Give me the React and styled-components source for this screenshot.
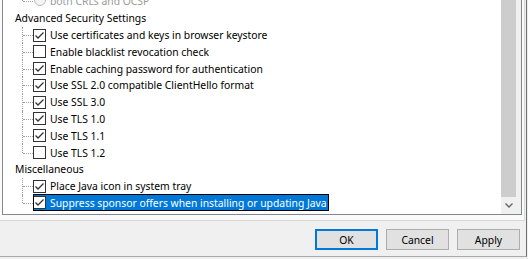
import { styled, createGlobalStyle } from 'styled-components'

const GlobalStyle = createGlobalStyle`
  body {
    margin: 0;
    background: #f0f0f0;
    overflow: hidden;
    font-family: 'Noto Sans', 'Open Sans', sans-serif;
    font-size: 10.35px;
  }
`

const items = [
  { kind: 'radio', label: 'both CRLs and OCSP', disabled: true, last: true },
  { kind: 'group', label: 'Advanced Security Settings' },
  { kind: 'check', label: 'Use certificates and keys in browser keystore', checked: true },
  { kind: 'check', label: 'Enable blacklist revocation check', checked: false },
  { kind: 'check', label: 'Enable caching password for authentication', checked: true },
  { kind: 'check', label: 'Use SSL 2.0 compatible ClientHello format', checked: true },
  { kind: 'check', label: 'Use SSL 3.0', checked: true },
  { kind: 'check', label: 'Use TLS 1.0', checked: true },
  { kind: 'check', label: 'Use TLS 1.1', checked: true },
  { kind: 'check', label: 'Use TLS 1.2', checked: false, last: true },
  { kind: 'group', label: 'Miscellaneous' },
  { kind: 'check', label: 'Place Java icon in system tray', checked: true },
  {
    kind: 'check',
    label: 'Suppress sponsor offers when installing or updating Java',
    checked: true,
    last: true,
    selected: true,
  },
]

const CheckMark = () => (
  <svg width="11" height="11" viewBox="0 0 11 11">
    <polyline
      points="1.5,5.5 4,8 9.5,2.5"
      fill="none"
      stroke="#333"
      strokeWidth="1.3"
    />
  </svg>
)

const TreeRow = ({ item }) => {
  if (item.kind === 'group') {
    return (
      <Row>
        <GroupLabel>{item.label}</GroupLabel>
      </Row>
    )
  }
  return (
    <Row $child $last={item.last}>
      <Item $selected={item.selected}>
        {item.kind === 'radio' ? (
          <Radio />
        ) : (
          <CheckBox>{item.checked && <CheckMark />}</CheckBox>
        )}
        <Label $selected={item.selected} $disabled={item.disabled}>
          {item.label}
        </Label>
      </Item>
    </Row>
  )
}

export default function App() {
  return (
    <>
      <GlobalStyle />
      <Window>
        <TabPage>
          <TreePanel>
            <TreeBody>
              {items.map((item) => (
                <TreeRow key={item.label} item={item} />
              ))}
            </TreeBody>
            <ScrollBar>
              <Thumb />
              <ArrowButton>
                <svg width="8" height="5" viewBox="0 0 8 5">
                  <polyline
                    points="0.5,0.5 4,4 7.5,0.5"
                    fill="none"
                    stroke="#606060"
                    strokeWidth="1.3"
                  />
                </svg>
              </ArrowButton>
            </ScrollBar>
          </TreePanel>
        </TabPage>
        <ButtonBar>
          <Button $default>OK</Button>
          <Button>Cancel</Button>
          <Button>Apply</Button>
        </ButtonBar>
      </Window>
    </>
  )
}

const Window = styled.div`
  width: 527px;
  height: 257px;
  box-sizing: border-box;
  border-right: 1px solid #6e6e6e;
  border-bottom: 1px solid #a8a8a8;
  background: #f0f0f0;
  display: flex;
  flex-direction: column;
`

const TabPage = styled.div`
  width: 525px;
  height: 221px;
  box-sizing: border-box;
  background: #fafafa;
  border-right: 1px solid #d9d9d9;
  border-bottom: 1px solid #d9d9d9;
  overflow: hidden;
`

const TreePanel = styled.div`
  margin: -20px 0 0 2px;
  width: 520px;
  height: 235px;
  box-sizing: border-box;
  border: 1px solid #828790;
  background: #fff;
  display: flex;
`

const TreeBody = styled.div`
  flex: 1;
  padding-top: 12px;
  overflow: hidden;
`

const Row = styled.div`
  position: relative;
  height: 16.8px;
  display: flex;
  align-items: center;
  padding-left: ${({ $child }) => ($child ? '30px' : '12px')};

  ${({ $child, $last }) =>
    $child &&
    `
    &::before {
      content: '';
      position: absolute;
      left: 19px;
      top: 0;
      height: ${$last ? '50%' : '100%'};
      border-left: 1px dotted #a0a0a0;
    }
    &::after {
      content: '';
      position: absolute;
      left: 20px;
      top: 50%;
      width: 10px;
      border-top: 1px dotted #a0a0a0;
    }
  `}
`

const GroupLabel = styled.span`
  color: #000;
  white-space: nowrap;
`

const Item = styled.div`
  display: flex;
  align-items: center;
  height: 17px;
  box-sizing: border-box;
  padding-right: 2px;
  background: ${({ $selected }) => ($selected ? '#0078d7' : 'transparent')};
  outline: ${({ $selected }) => ($selected ? '1px solid #000' : 'none')};
  outline-offset: -1px;
`

const CheckBox = styled.span`
  width: 13px;
  height: 13px;
  box-sizing: border-box;
  border: 1px solid #333;
  background: #fff;
  display: flex;
  align-items: center;
  justify-content: center;
  flex-shrink: 0;
`

const Radio = styled.span`
  width: 12px;
  height: 12px;
  margin: -3px 0.5px 0 0.5px;
  box-sizing: border-box;
  border: 1px solid #bcbcbc;
  border-radius: 50%;
  background: #f4f4f4;
  flex-shrink: 0;
`

const Label = styled.span`
  margin-left: 4px;
  white-space: nowrap;
  color: ${({ $selected, $disabled }) =>
    $selected ? '#fff' : $disabled ? '#9a9a9a' : '#000'};
`

const ScrollBar = styled.div`
  width: 20px;
  background: #f0f0f0;
  display: flex;
  flex-direction: column;
`

const Thumb = styled.div`
  flex: 1;
  width: 15px;
  background: #cdcdcd;
`

const ArrowButton = styled.div`
  height: 17px;
  width: 15px;
  display: flex;
  align-items: center;
  justify-content: center;
`

const ButtonBar = styled.div`
  flex: 1;
  display: flex;
  justify-content: flex-end;
  align-items: flex-start;
  gap: 8px;
  padding: 8px 6px 0 0;
`

const Button = styled.button`
  width: 63px;
  height: 21px;
  box-sizing: border-box;
  padding: 0;
  font: inherit;
  color: #000;
  background: #e1e1e1;
  border: ${({ $default }) => ($default ? '2px solid #0078d7' : '1px solid #adadad')};
  border-radius: 0;
`
